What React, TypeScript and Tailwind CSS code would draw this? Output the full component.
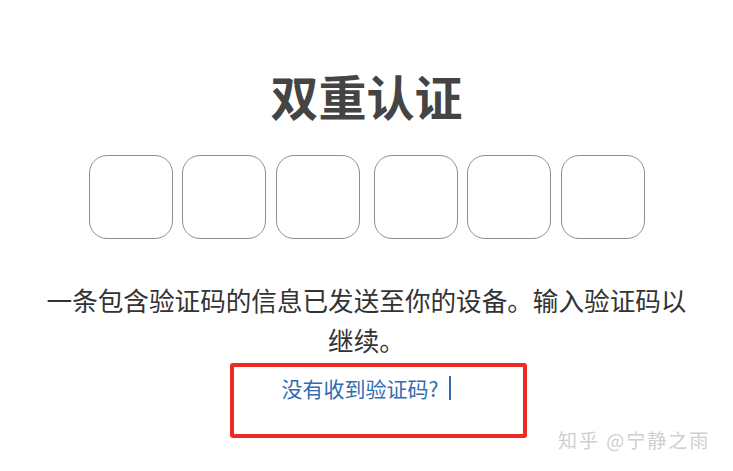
export default function App() {
  const first = [0, 1, 2];
  const second = [3, 4, 5];

  return (
    <div
      className="relative h-[471px] w-[733px] overflow-hidden bg-white"
      style={{ fontFamily: '"Noto Sans CJK SC", "Noto Sans", sans-serif' }}
    >
      <div className="flex flex-col items-center">
        {/* Title */}
        <h1 className="pt-[66px] text-[48px] font-bold leading-[58px] text-[#444444]">
          双重认证
        </h1>

        {/* Code inputs */}
        <div className="mt-[31px] flex gap-[14px]">
          <div className="flex gap-[9.5px]">
            {first.map((i) => (
              <div
                key={i}
                className="h-[84px] w-[84px] rounded-[18px] border border-[#8f8f8f] bg-white"
              />
            ))}
          </div>
          <div className="flex gap-[9.5px]">
            {second.map((i) => (
              <div
                key={i}
                className="h-[84px] w-[84px] rounded-[18px] border border-[#8f8f8f] bg-white"
              />
            ))}
          </div>
        </div>

        {/* Message */}
        <p className="mt-[41px] w-[664px] text-center text-[25.6px] leading-[40px] text-[#333333]">
          一条包含验证码的信息已发送至你的设备。输入验证码以继续。
        </p>

        {/* Resend link */}
        <div className="mt-[14px] flex items-center gap-[11px]">
          <a className="text-[21px] leading-[28px] text-[#2f6db0]">没有收到验证码?</a>
          <span className="h-[24px] w-[2px] bg-[#2f6db0]" />
        </div>
      </div>

      {/* Red annotation box */}
      <div className="absolute left-[230px] top-[363px] h-[75px] w-[297px] rounded-[3px] border-4 border-[#ee2a24]" />

      {/* Watermark */}
      <div className="absolute left-[558px] top-[428px] text-[19px] leading-[24px] tracking-[2px] text-[#cfcfcf]">
        知乎 @宁静之雨
      </div>
    </div>
  );
}
